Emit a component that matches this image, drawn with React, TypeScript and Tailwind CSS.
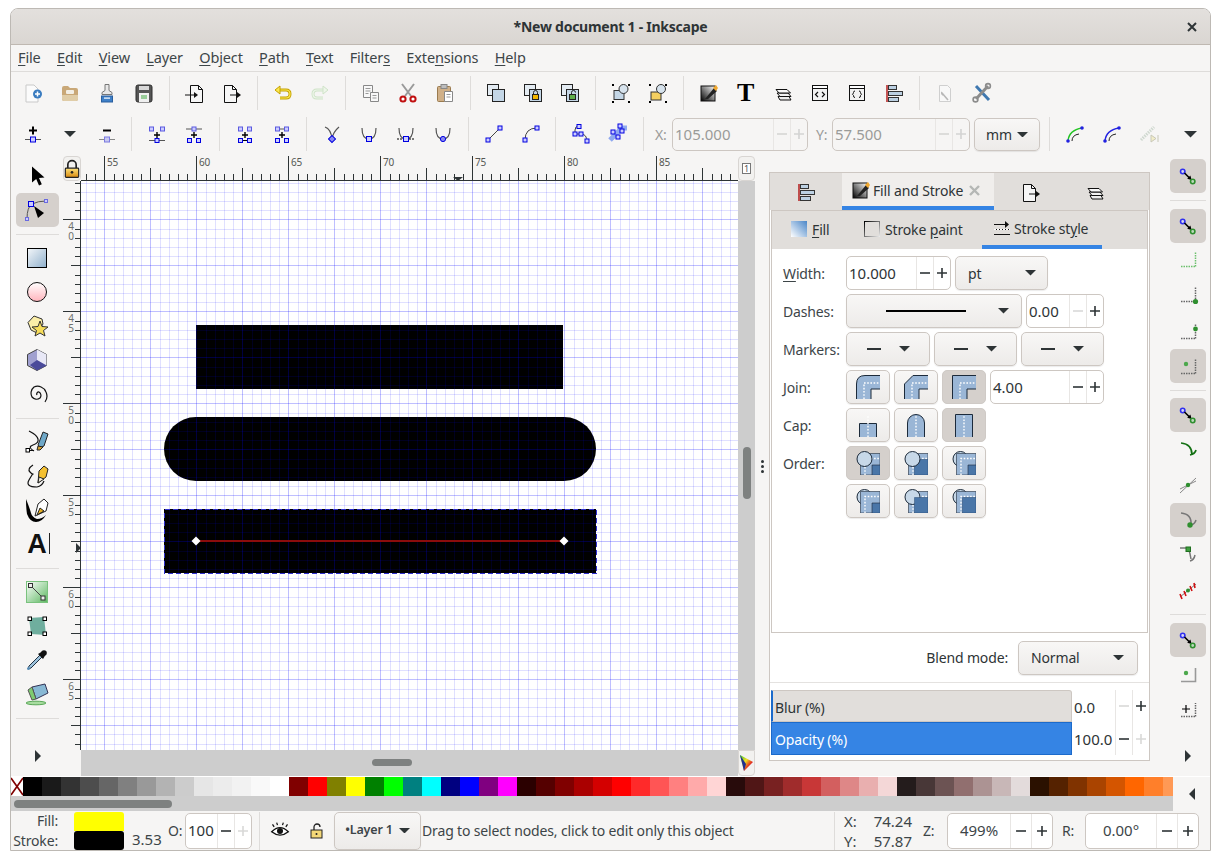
import type { ReactNode } from "react";

const ink = "#2e3436";

function Ico({ children, size = 24, view = "0 0 24 24" }: { children: ReactNode; size?: number; view?: string }) {
  return (
    <svg width={size} height={size} viewBox={view} fill="none" className="shrink-0">
      {children}
    </svg>
  );
}

function Caret({ w = 14 }: { w?: number }) {
  return (
    <svg width={w} height={w / 2} viewBox="0 0 14 7" className="shrink-0">
      <path d="M0 0h14L7 7z" fill={ink} />
    </svg>
  );
}

function NodeSq({ x, y, c = "#0000e0", f = "#ccccff", s = 4 }: { x: number; y: number; c?: string; f?: string; s?: number }) {
  return <rect x={x - s / 2} y={y - s / 2} width={s} height={s} fill={f} stroke={c} />;
}

function Page({ x, dog = true }: { x: number; dog?: boolean }) {
  return (
    <>
      <path d={`M${x} 4.5h8l4 4v13h-12z`} fill="#f6f6f6" stroke="#111" />
      {dog && <path d={`M${x + 8} 4.5v4h4`} stroke="#111" />}
    </>
  );
}

function Cross({ x, y, s = 3 }: { x: number; y: number; s?: number }) {
  return <path d={`M${x - s} ${y}h${2 * s}M${x} ${y - s}v${2 * s}`} stroke="#000" strokeWidth={s > 3 ? 2 : 1.4} />;
}

/* ---- first toolbar ---- */
const row1: ReactNode[][] = [
  [
    <Ico key="new"><path d="M5 4h8l4 4v13H5z" fill="#fbfbfb" stroke="#c9c9c9" /><circle cx="16.5" cy="13" r="4.5" fill="#3a7cc0" /><path d="M14 13h5M16.5 10.5v5" stroke="#fff" strokeWidth="1.5" /></Ico>,
    <Ico key="open"><path d="M4 7q0-2 2-2h4l2 2h6q2 0 2 2v9q0 2-2 2H6q-2 0-2-2z" fill="#c9a878" /><path d="M4 14h16v4q0 2-2 2H6q-2 0-2-2z" fill="#e0cda8" /><rect x="8" y="9" width="8" height="4" rx="1" fill="#f3efe6" /></Ico>,
    <Ico key="imp"><path d="M10 3.5h4v6l3 2v2H7v-2l3-2z" fill="#e8e8e8" stroke="#777" /><rect x="6.5" y="15" width="11" height="6" fill="#3f80c8" stroke="#2a5f9e" /><rect x="9" y="16.5" width="6" height="1.2" fill="#fff" /></Ico>,
    <Ico key="save"><rect x="4" y="4" width="16" height="17" rx="2" fill="#555" stroke="#2e2e2e" /><rect x="7" y="5" width="10" height="4" fill="#d8d8d8" /><rect x="7" y="12" width="10" height="9" fill="#f0f0f0" /><rect x="9" y="14" width="6" height="4" fill="#9c9" /></Ico>,
  ],
  [
    <Ico key="di"><Page x={7.5} /><path d="M2 14h11" stroke="#111" /><path d="M11 11l4 3-4 3z" fill="#111" /></Ico>,
    <Ico key="do"><Page x={4.5} /><path d="M10 14h8" stroke="#111" /><path d="M17 11l4 3-4 3z" fill="#111" /></Ico>,
  ],
  [
    <Ico key="undo"><path d="M6 9h9q4 0 4 4t-4 4H9" stroke="#c4a000" strokeWidth="3" /><path d="M6 9h9q4 0 4 4t-4 4H9" stroke="#fce94f" strokeWidth="1.2" /><path d="M9 5L4 9l5 4z" fill="#fce94f" stroke="#c4a000" /></Ico>,
    <Ico key="redo"><path d="M18 9H9q-4 0-4 4t4 4h6" stroke="#cfe3c8" strokeWidth="3" /><path d="M18 9H9q-4 0-4 4t4 4h6" stroke="#eef6ea" strokeWidth="1.2" /><path d="M15 5l5 4-5 4z" fill="#eef6ea" stroke="#cfe3c8" /></Ico>,
  ],
  [
    <Ico key="copy"><path d="M4.5 4.5h9v12h-9z" fill="#f8f8f8" stroke="#888" /><path d="M6.5 7.5h5M6.5 10h5M6.5 12.5h3" stroke="#999" /><path d="M11.5 11.5h8v9h-8z" fill="#f8f8f8" stroke="#888" /><path d="M13.5 14.5h4M13.5 17h4" stroke="#999" /></Ico>,
    <Ico key="cut"><path d="M6 3l9 12M18 3L9 15" stroke="#9a9a9a" strokeWidth="2" /><circle cx="7" cy="18" r="2.6" fill="#fff" stroke="#c01010" strokeWidth="2" /><circle cx="17" cy="18" r="2.6" fill="#fff" stroke="#c01010" strokeWidth="2" /></Ico>,
    <Ico key="paste"><rect x="4.5" y="5.5" width="13" height="15" rx="1" fill="#d0b088" stroke="#9a7b4f" /><rect x="8" y="3.5" width="6" height="4" fill="#bdbdbd" stroke="#888" /><path d="M11.5 10.5h8v10h-8z" fill="#fff" stroke="#888" /><path d="M13.5 13.5h4M13.5 16h4" stroke="#999" /></Ico>,
  ],
  [
    <Ico key="dup"><rect x="3.5" y="3.5" width="11" height="11" fill="#e3ebf2" stroke="#222" /><rect x="8.5" y="8.5" width="12" height="12" fill="#c4d6e6" stroke="#222" /></Ico>,
    <Ico key="clone"><rect x="3.5" y="3.5" width="11" height="11" fill="#e3ebf2" stroke="#222" /><rect x="8.5" y="8.5" width="12" height="12" fill="#c4d6e6" stroke="#222" /><rect x="11.5" y="13.5" width="6" height="5" fill="#f2b600" stroke="#222" /><path d="M12.5 13v-1.5a2 2 0 0 1 4 0V13" stroke="#222" /></Ico>,
    <Ico key="unclone"><rect x="3.5" y="3.5" width="11" height="11" fill="#e3ebf2" stroke="#222" /><rect x="8.5" y="8.5" width="12" height="12" fill="#c4d6e6" stroke="#222" /><rect x="11.5" y="13.5" width="6" height="5" fill="#5fae4b" stroke="#222" /><path d="M13.5 13v-1.5a2 2 0 0 1 4 0" stroke="#222" /></Ico>,
  ],
  [
    <Ico key="grp"><rect x="5" y="9.5" width="10" height="9" fill="#c4d6e6" stroke="#333" /><circle cx="14.5" cy="8" r="4.5" fill="#d6e2ec" stroke="#333" />{[[3, 3], [19, 3], [3, 20], [19, 20]].map(([x, y]) => <rect key={`${x}${y}`} x={x} y={y} width="2" height="2" fill="#000" />)}</Ico>,
    <Ico key="ugrp"><rect x="5" y="11" width="10" height="8" fill="#f4cf60" stroke="#333" /><circle cx="15" cy="8" r="4.5" fill="#d6e2ec" stroke="#333" />{[[3, 3], [19, 3], [3, 20], [19, 20]].map(([x, y]) => <rect key={`${x}${y}`} x={x} y={y} width="2" height="2" fill="#000" />)}</Ico>,
  ],
  [
    <FillStrokeIcon key="fs" />,
    <span key="t" className="[font-family:'Liberation_Serif',serif] text-[26px] leading-none font-bold text-black">T</span>,
    <LayersIcon key="lay" />,
    <Ico key="xml"><rect x="4.5" y="4.5" width="15" height="15" fill="#f2f2f2" stroke="#111" /><rect x="4.5" y="4.5" width="15" height="3" fill="#fff" stroke="#111" /><path d="M10 11l-2.5 2.5L10 16M14 11l2.5 2.5L14 16" stroke="#111" strokeWidth="1.2" /></Ico>,
    <Ico key="obj"><rect x="4.5" y="4.5" width="15" height="15" fill="#f2f2f2" stroke="#111" /><rect x="4.5" y="4.5" width="15" height="3" fill="#fff" stroke="#111" /><path d="M10 10q-1.5 0-1.5 1.5v.5l-1 1.3 1 1.2v.5q0 1.5 1.5 1.5M14 10q1.5 0 1.5 1.5v.5l1 1.3-1 1.2v.5q0 1.5-1.5 1.5" stroke="#111" /></Ico>,
    <AlignIcon key="al" />,
  ],
  [
    <Ico key="dp"><path d="M6.5 4.5h8l3 3v13h-11z" fill="#f8f8f8" stroke="#cfcfcf" /><path d="M9 12l6 7M9 11a2 2 0 0 0 2 3" stroke="#b8b8b8" strokeWidth="1.6" /></Ico>,
    <Ico key="pref"><path d="M6 5l13 14" stroke="#3f78b0" strokeWidth="3" /><path d="M18 5L6 18" stroke="#8c8c8c" strokeWidth="3" /><circle cx="5.5" cy="18.5" r="2.4" stroke="#8c8c8c" strokeWidth="1.6" /><circle cx="18" cy="5" r="2.4" stroke="#8c8c8c" strokeWidth="1.6" /></Ico>,
  ],
];

function FillStrokeIcon() {
  return (
    <Ico>
      <defs>
        <linearGradient id="fsg" x1="0" y1="1" x2="1" y2="0">
          <stop offset="0" stopColor="#000" />
          <stop offset="1" stopColor="#fff" />
        </linearGradient>
      </defs>
      <rect x="4" y="5" width="14" height="15" fill="url(#fsg)" stroke="#111" />
      <path d="M8 18l9-11 3 3-9 8z" fill="#222" />
      <path d="M16 7l3-3 2 3-2 3z" fill="#f0a830" />
    </Ico>
  );
}

function LayersIcon() {
  return (
    <Ico>
      <path d="M7 15.5h11l2 3.5H9z" fill="#eee" stroke="#111" />
      <path d="M6 12h11l3 3.5H9z" fill="#f3f3f3" stroke="#111" />
      <path d="M5 8.5h11l3.5 3.5H8z" fill="#fafafa" stroke="#111" />
    </Ico>
  );
}

function AlignIcon() {
  return (
    <Ico>
      <path d="M5 4v17" stroke="#b01010" strokeWidth="1.4" />
      <rect x="6.5" y="4.5" width="8" height="4" fill="#bcd0e2" stroke="#333" />
      <rect x="6.5" y="10.5" width="14" height="4" fill="#bcd0e2" stroke="#333" />
      <rect x="6.5" y="16.5" width="10" height="4" fill="#bcd0e2" stroke="#333" />
    </Ico>
  );
}

/* ---- second toolbar ---- */
const blue = "#0000e0";
const row2a: ReactNode[][] = [
  [
    <Ico key="add"><Cross x={12} y={8.5} s={4} /><path d="M4 17.5h16" stroke="#555" /><NodeSq x={12} y={17.5} s={5} /></Ico>,
    <Caret key="c" w={12} />,
    <Ico key="del"><path d="M8 8.5h8" stroke="#000" strokeWidth="2" /><path d="M4 17.5h16" stroke="#888" /><NodeSq x={12} y={17.5} s={5} c="#7a7ae0" f="#c8c8f0" /></Ico>,
  ],
  [
    <Ico key="j1"><NodeSq x={6.5} y={7} c="#5a5ae0" /><NodeSq x={17.5} y={7} c="#5a5ae0" /><Cross x={12} y={13} /><path d="M4 18.5h16" stroke="#555" /><NodeSq x={12} y={18.5} /></Ico>,
    <Ico key="j2"><path d="M4 7h16" stroke="#555" /><NodeSq x={12} y={7} c="#5a5ae0" /><Cross x={12} y={13} /><NodeSq x={7.5} y={18.5} /><NodeSq x={16.5} y={18.5} /></Ico>,
  ],
  [
    <Ico key="j3"><NodeSq x={7.5} y={7} c="#5a5ae0" /><NodeSq x={16.5} y={7} c="#5a5ae0" /><Cross x={12} y={13} /><path d="M5 18.5h14" stroke="#000" /><NodeSq x={7.5} y={18.5} /><NodeSq x={16.5} y={18.5} /></Ico>,
    <Ico key="j4"><path d="M5 7h14" stroke="#555" /><NodeSq x={7.5} y={7} c="#5a5ae0" /><NodeSq x={16.5} y={7} c="#5a5ae0" /><Cross x={12} y={13} /><NodeSq x={7.5} y={18.5} /><NodeSq x={16.5} y={18.5} /></Ico>,
  ],
  [
    <Ico key="n1"><path d="M5 5q6 2 7 12Q13 10 19 5" stroke="#555" strokeWidth="1.2" /><rect x="9.5" y="14.5" width="5" height="5" fill="#8888f0" stroke={blue} transform="rotate(45 12 17)" /></Ico>,
    <Ico key="n2"><path d="M5 6q0 11 7 11t7-11" stroke="#555" strokeWidth="1.2" /><NodeSq x={12} y={17} s={5} /></Ico>,
    <Ico key="n3"><path d="M5 6q0 11 7 11t7-11" stroke="#555" strokeWidth="1.2" /><path d="M3 17h18" stroke="#000" strokeDasharray="2 1" /><NodeSq x={12} y={17} s={5} /></Ico>,
    <Ico key="n4"><path d="M5 6q0 11 7 11t7-11" stroke="#555" strokeWidth="1.2" /><circle cx="12" cy="17" r="2.6" fill="#8888f0" stroke={blue} /></Ico>,
  ],
  [
    <Ico key="s1"><path d="M6 18L18 6" stroke="#444" /><NodeSq x={6} y={18} /><NodeSq x={18} y={6} /></Ico>,
    <Ico key="s2"><path d="M6 18q0-12 12-12" stroke="#444" /><NodeSq x={6} y={18} /><NodeSq x={18} y={6} /></Ico>,
  ],
  [
    <Ico key="op"><path d="M6 12V8q0-4 4-4M6 12h6q6 0 6 8" stroke="#444" /><NodeSq x={10} y={4.5} /><NodeSq x={6} y={12} /><NodeSq x={12} y={12} /><NodeSq x={18} y={19} /></Ico>,
    <Ico key="sp"><path d="M4 18L16 6h5" stroke="#8fa8f0" strokeWidth="5" /><NodeSq x={14} y={4} /><NodeSq x={7} y={10} /><NodeSq x={16} y={9} /><NodeSq x={12} y={15} /></Ico>,
  ],
];

function ToolRow1() {
  return (
    <div className="flex h-[41.5px] items-center pl-[3px]">
      {row1.map((group, i) => (
        <div key={i} className="flex items-center">
          {i > 0 && <Sep w="w-[14px]" />}
          {group.map((icon, j) => <Slot key={j}>{icon}</Slot>)}
        </div>
      ))}
    </div>
  );
}

function Slot({ children }: { children: ReactNode }) {
  return <div className="flex h-[34px] w-[37px] shrink-0 items-center justify-center">{children}</div>;
}

function Sep({ w }: { w: string }) {
  return (
    <div className={`flex h-[34px] shrink-0 justify-center ${w}`}>
      <div className="h-full w-px bg-[#dedcda]" />
    </div>
  );
}

function Spin({
  value,
  width,
  box,
  minusOff,
  plusOff,
  off,
}: {
  value: string;
  width: string;
  box?: string;
  minusOff?: boolean;
  plusOff?: boolean;
  off?: boolean;
}) {
  const on = off ? "#d3d3d2" : ink;
  return (
    <div className={`flex items-stretch rounded-[5px] border border-[#cdc7c2] ${off ? "bg-[#f6f5f4]" : "bg-white"} ${width} ${box ?? "h-[34px]"}`}>
      <span className={`flex min-w-0 flex-1 items-center pl-[2px] text-[15px] tracking-normal ${off ? "text-[#9a9b99]" : "text-[#2e3436]"}`}>{value}</span>
      <PlusMinus sign="-" color={minusOff ? "#d9d9d8" : on} />
      <PlusMinus sign="+" color={plusOff ? "#d9d9d8" : on} />
    </div>
  );
}

function PlusMinus({ sign, color }: { sign: "+" | "-"; color: string }) {
  return (
    <div className="flex w-[17px] items-center justify-center border-l border-[#e8e6e4]">
      <svg width="10" height="10" viewBox="0 0 10 10">
        <path d={sign === "+" ? "M0 5h10M5 0v10" : "M0 5h10"} stroke={color} strokeWidth="1.6" />
      </svg>
    </div>
  );
}

const btn = "rounded-[5px] border border-[#cdc7c2] bg-gradient-to-b from-[#f8f7f6] to-[#edebe9] shadow-[0_1px_1px_rgba(0,0,0,0.08)]";

function ToolRow2() {
  return (
    <div className="flex h-[41.5px] items-center pl-[3px]">
      {row2a.map((group, i) => (
        <div key={i} className="flex items-center">
          {i > 0 && <Sep w="w-[13.5px]" />}
          {group.map((icon, j) => <Slot key={j}>{icon}</Slot>)}
        </div>
      ))}
      <Sep w="w-[13.5px]" />
      <span className="ml-[5px] w-[17px] text-[#9a9b99]">X:</span>
      <Spin value="105.000" width="w-[136px]" box="h-[33px]" off />
      <span className="ml-[8px] w-[16px] text-[#9a9b99]">Y:</span>
      <Spin value="57.500" width="w-[138px]" box="h-[33px]" off />
      <div className={`ml-[4px] flex h-[33px] w-[66px] items-center justify-center gap-[5px] ${btn}`}>
        mm <Caret w={11} />
      </div>
      <div className="ml-[3px]">
        <Sep w="w-[13px]" />
      </div>
      <Slot>
        <Ico><path d="M5 19q1-11 14-13" stroke="#22c422" strokeWidth="1.4" /><path d="M9 19q0-6 7-7" stroke="#222" /><circle cx="5" cy="19" r="1.8" fill="#2222e0" /><circle cx="19" cy="6" r="1.8" fill="#2222e0" /></Ico>
      </Slot>
      <Slot>
        <Ico><path d="M5 19q1-11 14-13" stroke="#2222e0" strokeWidth="1.4" /><path d="M9 19q0-6 7-7" stroke="#222" /><circle cx="5" cy="19" r="1.8" fill="#2222e0" /><circle cx="19" cy="6" r="1.8" fill="#2222e0" /></Ico>
      </Slot>
      <Slot>
        <Ico><path d="M4 18L17 5" stroke="#cfd8cf" strokeWidth="3" strokeDasharray="1.5 1" /><path d="M14 13l5 3.5-5 3.5zM21 13v7" fill="#f2edc8" stroke="#c8c8b8" /></Ico>
      </Slot>
      <div className="ml-[5px] flex w-[37px] justify-center">
        <Caret w={13} />
      </div>
    </div>
  );
}

/* ---- left toolbox ---- */
function LeftTools() {
  const tools: (ReactNode | null)[] = [
    <Ico key="sel"><path d="M7 2.5v16l4.2-3.6 2.8 6.6 2.8-1.2-2.8-6.4 5.5-.4z" fill="#000" /></Ico>,
    "node",
    null,
    <Ico key="rect"><defs><linearGradient id="rg" x1="0" y1="0" x2="1" y2="1"><stop offset="0" stopColor="#f4f7fa" /><stop offset="1" stopColor="#8fb0cc" /></linearGradient></defs><rect x="2.5" y="2.5" width="19" height="19" fill="url(#rg)" stroke="#000" /></Ico>,
    <Ico key="circ"><defs><linearGradient id="cg" x1="0" y1="1" x2="0" y2="0"><stop offset="0" stopColor="#ffb4bc" /><stop offset="1" stopColor="#fff" /></linearGradient></defs><circle cx="12" cy="12" r="9.5" fill="url(#cg)" stroke="#111" /></Ico>,
    <Ico key="star"><path d="M3 8.5L9 2l8 3 1 5-6 9-6-3z" fill="#fbeea8" stroke="#333" /><path d="M15 7l2 5.5 6 .5-4.5 3.5 1.5 5.5-5-3-5 3 1.5-5.5L7 13l6-.5z" fill="#f6dc5a" stroke="#333" /></Ico>,
    <Ico key="3d"><path d="M12 1.5l9.5 5v11l-9.5 5-9.5-5v-11z" fill="#a0a0d0" stroke="#444" /><path d="M12 1.5l9.5 5v11l-9.5-5z" fill="#e8e8f6" /><path d="M5 17l7-5 9.5 5.5-9.5 5z" fill="#4a4a9a" /></Ico>,
    <Ico key="sp"><path d="M12 13a2 2 0 0 1 2-3 4 4 0 0 1 1 6 6 6 0 0 1-8-1 8 8 0 0 1 2-10 9 9 0 0 1 12 5 10 10 0 0 1-1 10" stroke="#111" strokeWidth="1.2" /></Ico>,
    null,
    <Ico key="pen"><path d="M4 1q8 4 9 8t-5 6 1 6" stroke="#111" strokeWidth="1.2" /><path d="M3 20.5h6" stroke="#111" /><rect x="1" y="18.5" width="3.5" height="3.5" fill="#fff" stroke="#000" /><path d="M13 15l5-13 5 2-4 12-4 2z" fill="#6fa8c8" stroke="#222" /><path d="M12 20l1-4 5 1-3 3z" fill="#d4a030" stroke="#222" /></Ico>,
    <Ico key="pcl"><path d="M8 1Q2 5 5 8t3 2-4 6 8 7q5-1 7-6" stroke="#111" strokeWidth="1.2" /><path d="M13 19l1-12 5-5 4 3-2 8z" fill="#f4c030" stroke="#222" /><path d="M13 19l1-6 5 2z" fill="#f6f0e0" stroke="#222" /></Ico>,
    <Ico key="cal"><path d="M1 1q4 10 5 14t6 6q5 0 9-4-4 7-10 7t-9-8Q1 10 1 1z" fill="#000" /><path d="M10 18l3-12 6-5 4 4-2 8z" fill="#fff" stroke="#222" /><path d="M12 17l3-7 4 3z" fill="#e8b020" stroke="#222" /></Ico>,
    <div key="txt" className="relative flex h-[24px] w-[24px] items-center justify-center"><span className="[font-family:'Liberation_Sans',sans-serif] text-[27px] leading-none font-bold text-[#111]">A</span><span className="absolute top-[1px] right-[-1px] h-[21px] w-px bg-[#222]" /></div>,
    null,
    <Ico key="grad"><defs><linearGradient id="gg" x1="0" y1="0" x2="1" y2="1"><stop offset="0" stopColor="#fff" /><stop offset="1" stopColor="#5cb860" /></linearGradient></defs><rect x="1.5" y="1.5" width="21" height="21" fill="url(#gg)" stroke="#7ac27e" /><path d="M6 6l12 12" stroke="#444" /><rect x="3.5" y="3.5" width="4" height="4" fill="#eee" stroke="#333" /><rect x="16" y="16" width="4" height="4" fill="#eee" stroke="#333" /></Ico>,
    <Ico key="mesh"><path d="M4 4l15-1 2 18-15-1z" fill="#6fae9e" />{[[3, 3], [18, 3], [3, 18], [18, 18]].map(([x, y]) => <rect key={`${x}-${y}`} x={x} y={y} width="3.5" height="3.5" fill="#fff" stroke="#000" />)}</Ico>,
    <Ico key="drop"><path d="M3 21l1-3L15 7l2 2L6 20z" fill="#9cc2dc" stroke="#234" /><path d="M13 6l5-3 3 3-3 5z" fill="#111" /><circle cx="19" cy="5" r="2.8" fill="#111" /><circle cx="3.5" cy="20.5" r="1.5" fill="#5b8fb8" /></Ico>,
    <Ico key="buck"><ellipse cx="11" cy="21" rx="10" ry="1.8" fill="#a8dca0" stroke="#5aa858" /><path d="M7 5l13-3 3 9-12 6z" fill="#88b8d4" stroke="#335" /><path d="M3 8l4-3 4 12-4 1z" fill="#7ecb70" stroke="#555" /></Ico>,
    null,
  ];
  return (
    <div className="flex w-[52px] shrink-0 flex-col items-center pt-[4px]">
      {tools.map((t, i) => {
        if (t === null) {
          return (
            <div key={i} className="flex h-[14px] w-[43px] items-center">
              <div className="h-px w-full bg-[#dedcda]" />
            </div>
          );
        }
        if (t === "node") {
          return (
            <div key={i} className="flex h-[34px] w-[43px] items-center justify-center rounded-[5px] bg-[#d5d0cc]">
              <Ico>
                <path d="M2 21q0-12 5-15 6-3 14-3" stroke="#555" />
                <NodeSq x={6} y={6} s={5} />
                <NodeSq x={21} y={3} s={3} c="#6a6ae0" />
                <NodeSq x={2} y={21} s={3} c="#6a6ae0" />
                <path d="M9 8l10 7-6 5z" fill="#000" />
              </Ico>
            </div>
          );
        }
        return (
          <div key={i} className="flex h-[34px] w-[43px] items-center justify-center">
            {t}
          </div>
        );
      })}
      <div className="flex-1" />
      <svg width="8" height="12" viewBox="0 0 8 12" className="mb-[14px] ml-[1px]">
        <path d="M1 0l6 6-6 6z" fill={ink} />
      </svg>
    </div>
  );
}

/* ---- rulers and canvas ---- */
const range = (a: number, b: number) => Array.from({ length: b - a + 1 }, (_, i) => a + i);
const px = (v: number) => Math.round(v) + 0.5;

function TopRuler() {
  return (
    <svg width="657" height="26" className="shrink-0">
      {range(-2, 69).map((i) => {
        const x = px(23.4 + i * 9.2);
        const y0 = i % 10 === 0 ? 1 : i % 5 === 0 ? 13 : 19;
        return <line key={i} x1={x} x2={x} y1={y0} y2={26} stroke={ink} shapeRendering="crispEdges" />;
      })}
      <line x1="0" x2="657" y1="25.5" y2="25.5" stroke={ink} shapeRendering="crispEdges" />
      {[55, 60, 65, 70, 75, 80, 85].map((v, i) => (
        <text key={v} x={26 + i * 92} y="11" fontSize="10" fill="#555753" fontFamily="Noto Sans">
          {v}
        </text>
      ))}
      <path d="M372 22h10l-5 4z" fill={ink} />
    </svg>
  );
}

function LeftRuler() {
  return (
    <svg width="18" height="569" className="shrink-0">
      {range(-4, 57).map((i) => {
        const y = px(38.3 + i * 9.2);
        const x0 = i % 10 === 0 ? 0 : i % 5 === 0 ? 8 : 12;
        return <line key={i} x1={x0} x2={18} y1={y} y2={y} stroke={ink} shapeRendering="crispEdges" />;
      })}
      <line x1="17.5" x2="17.5" y1="0" y2="569" stroke={ink} shapeRendering="crispEdges" />
      {[40, 45, 50, 55, 60, 65].map((v, i) => (
        <text
          key={v}
          x="8"
          y={38.3 + i * 92}
          fontSize="10"
          fill="#6f716d"
          fontFamily="Noto Sans"
          letterSpacing="-4.6"
          className="[writing-mode:vertical-rl] [text-orientation:upright]"
        >
          {v}
        </text>
      ))}
      <path d="M13 362l5 5-5 5z" fill={ink} />
    </svg>
  );
}

function Canvas() {
  const vx = range(-2, 69).map((i) => ({ p: px(23.4 + i * 9.2), major: i % 5 === 0 }));
  const hy = range(-4, 57).map((i) => ({ p: px(38.3 + i * 9.2), major: i % 5 === 0 }));
  return (
    <svg width="657" height="569" className="shrink-0 bg-white" shapeRendering="crispEdges">
      <rect x="115" y="144" width="367" height="64" fill="#000" />
      <rect x="83" y="236" width="432" height="64" rx="32" fill="#000" shapeRendering="auto" />
      <rect x="83" y="328" width="432" height="64" fill="#000" />
      {vx.map((l, i) => (
        <line key={i} x1={l.p} x2={l.p} y1="0" y2="569" stroke="#0000ff" strokeOpacity={l.major ? 0.25 : 0.12} />
      ))}
      {hy.map((l, i) => (
        <line key={i} x1="0" x2="657" y1={l.p} y2={l.p} stroke="#0000ff" strokeOpacity={l.major ? 0.25 : 0.12} />
      ))}
      <rect x="83.5" y="328.5" width="432" height="64" fill="none" stroke="#3030d0" strokeDasharray="5 3" />
      <rect x="115" y="359" width="368" height="2" fill="#8b0c0c" />
      {[115, 483].map((x) => (
        <path key={x} d={`M${x} 355.5l4.5 4.5-4.5 4.5-4.5-4.5z`} fill="#fff" shapeRendering="auto" />
      ))}
    </svg>
  );
}

const swatches = [
  "#000000", "#1a1a1a", "#333333", "#4d4d4d", "#666666", "#808080", "#999999", "#b3b3b3", "#cccccc", "#e6e6e6", "#ececec", "#f2f2f2", "#f9f9f9", "#ffffff",
  "#800000", "#ff0000", "#808000", "#ffff00", "#008000", "#00ff00", "#008080", "#00ffff", "#000080", "#0000ff", "#800080", "#ff00ff",
  "#2b0000", "#550000", "#800000", "#aa0000", "#d40000", "#ff0000", "#ff2a2a", "#ff5555", "#ff8080", "#ffaaaa", "#ffd5d5",
  "#280b0b", "#501616", "#782121", "#a02c2c", "#c83737", "#d35f5f", "#de8787", "#e9afaf", "#f4d7d7",
  "#241c1c", "#483737", "#6c5353", "#916f6f", "#ac9393", "#c8b7b7", "#e3dbdb",
  "#2b1100", "#552200", "#803300", "#aa4400", "#d45500", "#ff6600", "#ff7f2a", "#ff9955",
];

/* ---- right snap bar, drawn in real pixels around the point 10,10 ---- */
function Snap({ kind }: { kind: string }) {
  const v = "-2 -2 24 24";
  const dotted = <path d="M3 17.5h14M17.5 17.5V3" stroke="#666" strokeWidth="1.5" strokeDasharray="1.5 1" />;
  switch (kind) {
    case "master":
      return <Ico view={v}><circle cx="4.7" cy="5.5" r="2.2" stroke="#3030f0" strokeWidth="1.6" fill="#d6d6f0" /><path d="M6.5 7l5 5" stroke="#000" strokeWidth="1.6" /><path d="M13.6 14l-4.4-1.2 3.2-3.2z" fill="#000" /><circle cx="14.7" cy="15.5" r="2.2" stroke="#2f8f2f" strokeWidth="1.6" fill="#bcd8bc" /></Ico>;
    case "bbox":
      return <Ico view={v}><path d="M3 15.5h14M17.5 15.5V1" stroke="#6cc06c" strokeWidth="1.5" strokeDasharray="1.5 1" /></Ico>;
    case "edge":
      return <Ico view={v}><path d="M3 15.5h14M17.5 15.5V1" stroke="#666" strokeWidth="1.5" strokeDasharray="1.5 1" /><circle cx="17.5" cy="15.5" r="2.6" fill="#2f8f2f" /></Ico>;
    case "corner":
      return <Ico view={v}><path d="M3 17.5h14M17.5 17.5V3" stroke="#666" strokeWidth="1.5" strokeDasharray="1.5 1" /><circle cx="17.5" cy="8" r="2.4" fill="#2f8f2f" /></Ico>;
    case "mid":
      return <Ico view={v}>{dotted}<circle cx="8" cy="8" r="2.2" fill="#4ca84c" /></Ico>;
    case "curve":
      return <Ico view={v}><path d="M3 3q11 1 11 12M18 10q-1 4-6 5" stroke="#137013" strokeWidth="1.7" /></Ico>;
    case "x":
      return <Ico view={v}><path d="M2 18L18 3M2 14l16-8" stroke="#888" /><circle cx="10" cy="10" r="2.2" fill="#2f8f2f" /></Ico>;
    case "smooth":
      return <Ico view={v}><path d="M3 3q11 1 10 12M18 10q-1 4-5 5" stroke="#777" strokeWidth="1.5" /><circle cx="12" cy="15" r="2.7" fill="#2f8f2f" /></Ico>;
    case "node":
      return <Ico view={v}><path d="M2 3h8q2 4 3 11M17 10q-1 5-5 6" stroke="#777" strokeWidth="1.5" /><rect x="8" y="2" width="4.5" height="4.5" fill="#3f9f3f" stroke="#1f6f1f" /></Ico>;
    case "red":
      return <Ico view={v}><path d="M2 17L18 4" stroke="#777" /><path d="M2 14l2 5M6 11l2 5M12 6l2 5M16 3l1 5" stroke="#d01010" strokeWidth="1.6" /><circle cx="10" cy="10.5" r="2" fill="#2f8f2f" /></Ico>;
    case "center":
      return <Ico view={v}><path d="M3 16.5h14.5V3" stroke="#999" strokeWidth="1.6" /><circle cx="8" cy="8" r="2.2" fill="#4ca84c" /></Ico>;
    default:
      return <Ico view={v}><path d="M3 16.5h14M17.5 16.5V3" stroke="#666" strokeWidth="1.5" strokeDasharray="1.5 1" /><path d="M4 9h8M8 5v8" stroke="#000" strokeWidth="1.2" /></Ico>;
  }
}

function RightTools() {
  const items = ["*master", "|", "*master", "bbox", "edge", "corner", "*mid", "|", "*master", "curve", "x", "*smooth", "node", "red", "|", "*master", "center", "rot"];
  return (
    <div className="flex w-[60px] shrink-0 flex-col pt-[3.5px] pl-[20px]">
      {items.map((it, i) => {
        if (it === "|") {
          return (
            <div key={i} className="flex h-[14.5px] w-[36px] items-center">
              <div className="h-px w-full bg-[#dedcda]" />
            </div>
          );
        }
        const active = it.startsWith("*");
        return (
          <div key={i} className="flex h-[35px] w-[36px] items-center justify-center">
            <div className={`flex h-[34px] w-[36px] items-center justify-center rounded-[5px] ${active ? "bg-[#d5d0cc]" : ""}`}>
              <Snap kind={active ? it.slice(1) : it} />
            </div>
          </div>
        );
      })}
      <div className="flex-1" />
      <div className="mb-[14px] flex w-[36px] justify-center">
        <svg width="8" height="12" viewBox="0 0 8 12">
          <path d="M1 0l6 6-6 6z" fill={ink} />
        </svg>
      </div>
    </div>
  );
}

/* ---- stroke style panel icons ---- */
const dots = { stroke: "#fff", strokeWidth: 1.4, strokeDasharray: "1.6 1.6" };
const light = "#9ab6d6";

function Join({ d }: { d: string }) {
  return (
    <Ico>
      <path d={`${d}H24V14H15V24H0.5Z`} fill={light} />
      <path d={d + "H24M24 14H15V24"} stroke="#1c2a3a" />
      <path d="M8 24V8H24" {...dots} />
    </Ico>
  );
}

function Cap({ d }: { d: string }) {
  return (
    <Ico>
      <path d={d + "Z"} fill={light} />
      <path d={d} stroke="#1c2a3a" />
      <path d="M12 24V3" {...dots} />
    </Ico>
  );
}

function Order({ layers }: { layers: string }) {
  const parts: Record<string, ReactNode> = {
    m: <circle key="m" cx="8.5" cy="8" r="7.5" fill="#c7d8e8" stroke="#1c2a3a" />,
    s: (
      <g key="s">
        <path d="M4.5 24V2.5H24V14H16V24z" fill={light} stroke="#1c2a3a" strokeWidth="0.6" />
        <path d="M9 24V7.5H24" {...dots} />
      </g>
    ),
    f: <path key="f" d="M10.5 24V8.5H24V24z" fill="#4a76a8" stroke="#2a4a70" strokeWidth="0.5" />,
  };
  return <Ico>{layers.split("").map((l) => parts[l])}</Ico>;
}

function IconBtn({ children, on }: { children: ReactNode; on?: boolean }) {
  return (
    <div className={`flex h-[34px] w-[44px] items-center justify-center ${on ? "rounded-[5px] border border-[#cfcac6] bg-[#d5d0cc]" : btn}`}>
      {children}
    </div>
  );
}

function Dropdown({ width, children, caret = 11 }: { width: string; children: ReactNode; caret?: number }) {
  return (
    <div className={`flex h-[34px] items-center ${width} ${btn}`}>
      {children}
      <Caret w={caret} />
    </div>
  );
}

function Label({ children }: { children: ReactNode }) {
  return <div className="w-[63px] shrink-0 text-[#3d4548]">{children}</div>;
}

function Row({ label, children }: { label: ReactNode; children: ReactNode }) {
  return (
    <div className="flex h-[34px] items-center">
      <Label>{label}</Label>
      <div className="flex items-center gap-[4px]">{children}</div>
    </div>
  );
}

function Dock() {
  return (
    <div className="mt-[17px] flex h-[589px] w-[381px] shrink-0 flex-col border-x border-b border-[#cdc7c2] bg-white">
      <div className="flex h-[38px] shrink-0 border-t border-[#cdc7c2] bg-[#e1dedb]">
        <div className="flex w-[72px] items-center justify-center"><AlignIcon /></div>
        <div className="flex w-[152px] items-center border-b-[4px] border-[#3584e4] bg-[#f0eeec] pt-[1px] pl-[7px]">
          <FillStrokeIcon />
          <span>Fill and Stroke</span>
          <svg width="11" height="11" viewBox="0 0 11 11" className="ml-[6px]"><path d="M1 1l9 9M10 1l-9 9" stroke="#b5b7b5" strokeWidth="2.4" /></svg>
        </div>
        <div className="flex w-[74px] items-center justify-center"><Ico><Page x={4.5} /><path d="M10 14h8" stroke="#111" /><path d="M17 11l4 3-4 3z" fill="#111" /></Ico></div>
        <div className="flex w-[54px] items-center justify-center"><LayersIcon /></div>
      </div>
      <div className="mx-px flex h-[423px] shrink-0 flex-col border-x border-b border-t border-[#cdc7c2]">
        <div className="flex h-[38px] shrink-0 bg-[#e1dedb]">
          <div className="flex w-[80px] items-center gap-[5px] pb-[2px] pl-[19px]">
            <svg width="16" height="16"><defs><linearGradient id="fl" x1="1" y1="0" x2="0" y2="1"><stop offset="0" stopColor="#4a86c8" /><stop offset="1" stopColor="#fff" /></linearGradient></defs><rect width="16" height="16" fill="url(#fl)" /></svg>
            <span><u className="underline-offset-2">F</u>ill</span>
          </div>
          <div className="flex w-[130px] items-center gap-[5px] pb-[2px] pl-[12px]">
            <svg width="16" height="16"><defs><linearGradient id="sp2" x1="1" y1="1" x2="0" y2="0"><stop offset="0" stopColor="#e8e8e8" /><stop offset="1" stopColor="#000" /></linearGradient></defs><rect x="0.5" y="0.5" width="15" height="15" fill="none" stroke="url(#sp2)" /></svg>
            <span>Stroke <u className="underline-offset-2">p</u>aint</span>
          </div>
          <div className="flex w-[120px] items-center gap-[4px] border-b-[4px] border-[#3584e4] pl-[12px]">
            <svg width="16" height="16" viewBox="0 0 16 16"><path d="M0 4.5h14M0 9.5h16" stroke="#111" strokeDasharray="20" /><path d="M0 9.5h16" stroke="#fff" strokeDasharray="2 1" /><path d="M0 14.5h16" stroke="#111" /><path d="M11 1l4 3.5-4 3.5z" fill="#111" /></svg>
            <span>Stroke st<u className="underline-offset-2">y</u>le</span>
          </div>
        </div>
        <div className="flex flex-col gap-[4px] pt-[7px] pl-[11px]">
          <Row label={<><u className="underline-offset-2">W</u>idth:</>}>
            <Spin value="10.000" width="w-[105px]" />
            <Dropdown width="w-[93px] pl-[12px] pr-[11px] justify-between">
              <span>pt</span>
            </Dropdown>
          </Row>
          <Row label="Dashes:">
            <div className={`flex h-[34px] w-[176px] items-center pr-[12px] pl-[39px] ${btn}`}>
              <div className="h-[2px] w-[80px] bg-black" />
              <div className="flex-1" />
              <Caret w={11} />
            </div>
            <Spin value="0.00" width="w-[78px]" minusOff />
          </Row>
          <Row label="Markers:">
            {["w-[84px]", "w-[83px]", "w-[83px]"].map((w, i) => (
              <div key={i} className={`flex h-[34px] items-center justify-center gap-[18px] ${w} ${btn}`}>
                <div className="h-[2px] w-[14px] bg-[#2e3436]" />
                <Caret w={11} />
              </div>
            ))}
          </Row>
          <Row label="Join:">
            <IconBtn><Join d="M0.5 24V9Q0.5 0.5 9 0.5" /></IconBtn>
            <IconBtn><Join d="M0.5 24V9L9 0.5" /></IconBtn>
            <IconBtn on><Join d="M0.5 24V0.5" /></IconBtn>
            <Spin value="4.00" width="w-[114px]" />
          </Row>
          <Row label="Cap:">
            <IconBtn><Cap d="M3.5 24V10.5H20.5V24" /></IconBtn>
            <IconBtn><Cap d="M3.5 24V10A8.5 8.5 0 0 1 20.5 10V24" /></IconBtn>
            <IconBtn on><Cap d="M3.5 24V1.5H20.5V24" /></IconBtn>
          </Row>
          <Row label="Order:">
            <IconBtn on><Order layers="fsm" /></IconBtn>
            <IconBtn><Order layers="sfm" /></IconBtn>
            <IconBtn><Order layers="mfs" /></IconBtn>
          </Row>
          <Row label="">
            <IconBtn><Order layers="fms" /></IconBtn>
            <IconBtn><Order layers="smf" /></IconBtn>
            <IconBtn><Order layers="msf" /></IconBtn>
          </Row>
        </div>
      </div>
      <div className="flex h-[50px] shrink-0 items-center justify-end border-b border-[#e4e2e0] pr-[11px]">
        <span className="mr-[10px]">Blend mode:</span>
        <Dropdown width="w-[120px] pl-[12px] pr-[13px] justify-between">
          <span>Normal</span>
        </Dropdown>
      </div>
      <div className="flex flex-col pt-[7px] pl-px">
        <div className="flex h-[32px] items-stretch">
          <div className="flex w-[301px] items-center rounded-tr-[3px] border border-l-2 border-[#cdc7c2] border-l-[#1b6acb] bg-[#e1dedb] pt-[2px] pl-[2px]">Blur (%)</div>
          <span className="flex w-[43px] items-center pt-[2px] pl-[2px] text-[15px] tracking-normal">0.0</span>
          <PlusMinus sign="-" color="#d9d9d8" />
          <PlusMinus sign="+" color={ink} />
        </div>
        <div className="flex h-[33px] items-stretch">
          <div className="flex w-[301px] items-center border border-[#1b6acb] bg-[#3584e4] pt-[2px] pl-[3px] text-white">Opacity (%)</div>
          <span className="flex w-[43px] items-center pt-[2px] pl-[2px] text-[15px] tracking-normal">100.0</span>
          <PlusMinus sign="-" color={ink} />
          <PlusMinus sign="+" color="#d9d9d8" />
        </div>
      </div>
    </div>
  );
}

function MiniLock({ gold = true }: { gold?: boolean }) {
  return (
    <Ico size={20}>
      <defs>
        <linearGradient id="lk" x1="0" y1="0" x2="0" y2="1">
          <stop offset="0" stopColor="#fde27a" />
          <stop offset="1" stopColor="#d88a10" />
        </linearGradient>
      </defs>
      <path d="M7 11V7a5 5 0 0 1 10 0v4" stroke="#222" strokeWidth="2" />
      <rect x="4" y="11" width="16" height="11" rx="1" fill={gold ? "url(#lk)" : "#fff"} stroke="#222" strokeWidth="1.4" />
      <circle cx="12" cy="16" r="1.6" fill="#222" />
    </Ico>
  );
}

function StatusBar() {
  return (
    <div className="flex h-[39px] shrink-0 items-center text-[#3d4548]">
      <div className="flex w-[47px] flex-col items-end leading-[20px]">
        <span>Fill:</span>
        <span>Stroke:</span>
      </div>
      <div className="ml-[16px] flex w-[50px] flex-col">
        <div className="h-[19px] rounded-t-[3px] bg-[#ffff00]" />
        <div className="h-[19px] rounded-[3px] bg-black" />
      </div>
      <span className="mt-[18px] ml-[8px] w-[36px] text-[15px] tracking-normal">3.53</span>
      <span className="w-[17px]">O:</span>
      <Spin value="100" width="w-[67px]" box="h-[36px]" plusOff />
      <div className="ml-[7px] h-[38px] w-px bg-[#dedcda]" />
      <div className="flex w-[40px] justify-center">
        <Ico size={20}>
          <path d="M2 13q10-10 20 0-10 8-20 0z" fill="#fff" stroke="#111" strokeWidth="1.6" />
          <circle cx="12" cy="12" r="3.6" fill="#111" />
          <path d="M5 7L3 4M9 5L8 2M15 5l1-3M19 7l2-3" stroke="#111" strokeWidth="1.5" />
        </Ico>
      </div>
      <div className="flex w-[33px] justify-center">
        <svg width="14" height="16" viewBox="0 0 14 16"><path d="M4 7V4a3 3 0 0 1 6 0" stroke="#222" strokeWidth="1.3" fill="none" /><rect x="1" y="7" width="11" height="8" fill="#f4d878" stroke="#222" /><circle cx="6.5" cy="11" r="1" fill="#222" /></svg>
      </div>
      <div className={`ml-[1px] flex h-[38px] w-[87px] items-center justify-center gap-[6px] text-[12.5px] font-semibold ${btn}`}>
        <span>•Layer 1</span>
        <Caret w={11} />
      </div>
      <span className="ml-[1px] w-[412px] whitespace-nowrap">Drag to select nodes, click to edit only this object</span>
      <div className="h-[38px] w-px bg-[#dedcda]" />
      <div className="ml-[9px] flex w-[68px] flex-col text-[15px] leading-[20px] tracking-normal">
        <div className="flex justify-between"><span>X:</span><span>74.24</span></div>
        <div className="flex justify-between"><span>Y:</span><span>57.87</span></div>
      </div>
      <span className="ml-[11px] w-[24px]">Z:</span>
      <div className="flex h-[36px] w-[106px] rounded-[5px] border border-[#cdc7c2] bg-white">
        <span className="flex flex-1 items-center justify-center text-[15px] tracking-normal">499%</span>
        <div className="flex w-[21px] items-center justify-center border-l border-[#e8e6e4]"><svg width="10" height="10"><path d="M0 5h10" stroke={ink} strokeWidth="1.6" /></svg></div>
        <div className="flex w-[21px] items-center justify-center border-l border-[#e8e6e4]"><svg width="10" height="10"><path d="M0 5h10M5 0v10" stroke={ink} strokeWidth="1.6" /></svg></div>
      </div>
      <span className="ml-[9px] w-[23px]">R:</span>
      <div className="flex h-[36px] w-[114px] rounded-[5px] border border-[#cdc7c2] bg-white">
        <span className="flex flex-1 items-center justify-center text-[15px] tracking-normal">0.00°</span>
        <div className="flex w-[21px] items-center justify-center border-l border-[#e8e6e4]"><svg width="10" height="10"><path d="M0 5h10" stroke={ink} strokeWidth="1.6" /></svg></div>
        <div className="flex w-[21px] items-center justify-center border-l border-[#e8e6e4]"><svg width="10" height="10"><path d="M0 5h10M5 0v10" stroke={ink} strokeWidth="1.6" /></svg></div>
      </div>
    </div>
  );
}

const menus: [string, string, string][] = [
  ["", "F", "ile"], ["", "E", "dit"], ["", "V", "iew"], ["", "L", "ayer"], ["", "O", "bject"], ["", "P", "ath"], ["", "T", "ext"],
  ["Filter", "s", ""], ["Exte", "n", "sions"], ["", "H", "elp"],
];

export default function App() {
  return (
    <div className="h-[860px] w-[1220px] overflow-hidden bg-white pt-[8px] pl-[10px] [font-family:'Noto_Sans',sans-serif] text-[14px] tracking-[-0.15px] text-[#2e3436]">
      <div className="flex h-[843px] w-[1201px] flex-col overflow-hidden rounded-t-[8px] border border-[#bdb9b4] bg-[#f6f5f4]">
        <div className="relative flex h-[36px] shrink-0 items-center justify-center border-b border-[#bfb8b1] bg-gradient-to-b from-[#e3e0dd] to-[#dad6d2] font-bold tracking-[-0.25px]">
          *New document 1 - Inkscape
          <svg width="10" height="10" viewBox="0 0 10 10" className="absolute top-[13px] right-[13px]">
            <path d="M1 1l8 8M9 1L1 9" stroke={ink} strokeWidth="2" />
          </svg>
        </div>
        <div className="flex h-[27px] shrink-0 items-center gap-[16.4px] border-b border-[#dedcda] pl-[7px] text-[14.5px] text-[#3d4548]">
          {menus.map(([a, u, b]) => (
            <span key={u + b}>
              {a}
              <u className="underline-offset-2">{u}</u>
              {b}
            </span>
          ))}
        </div>
        <ToolRow1 />
        <ToolRow2 />
        <div className="flex h-[621px] shrink-0">
          <LeftTools />
          <div className="flex w-[692px] shrink-0 flex-col">
            <div className="flex h-[26px] shrink-0">
              <div className="flex h-[25px] w-[18px] items-center justify-center self-end rounded-[4px] border border-[#d8d5d2] bg-[#f2f1ef]">
                <MiniLock />
              </div>
              <TopRuler />
              <div className="flex h-[25px] w-[17px] items-center justify-center self-end rounded-[4px] border border-[#d8d5d2] bg-[#f2f1ef]">
                <div className="flex h-[11px] w-[9px] items-center justify-center border border-[#777] bg-white text-[9px] leading-none text-[#555]">1</div>
              </div>
            </div>
            <div className="flex h-[569px] shrink-0">
              <LeftRuler />
              <Canvas />
              <div className="flex w-[17px] justify-center bg-[#cdcdcd] pt-[266px]">
                <div className="h-[52px] w-[8px] rounded-full bg-[#7e8180]" />
              </div>
            </div>
            <div className="flex h-[26px] shrink-0">
              <div className="w-[18px]" />
              <div className="flex w-[657px] items-center bg-[#cdcdcd] pl-[291px]">
                <div className="mt-[-1px] h-[7px] w-[40px] rounded-full bg-[#7e8180]" />
              </div>
              <div className="flex w-[17px] items-center justify-center rounded-b-[4px] border border-[#d8d5d2] bg-[#f2f1ef]">
                <svg width="15" height="18" viewBox="0 0 15 18">
                  <defs>
                    <linearGradient id="wh" x1="0" y1="0" x2="1" y2="1">
                      <stop offset="0" stopColor="#30c030" />
                      <stop offset="0.4" stopColor="#f0e020" />
                      <stop offset="0.7" stopColor="#e02020" />
                      <stop offset="1" stopColor="#d020c0" />
                    </linearGradient>
                  </defs>
                  <path d="M1 1l13 7-9 9z" fill="url(#wh)" />
                  <path d="M5 17L1 1l6 9z" fill="#203090" />
                </svg>
              </div>
            </div>
          </div>
          <div className="flex w-[14px] shrink-0 flex-col items-center gap-[2px] pt-[305px]">
            <div className="h-[3px] w-[3px] rounded-full bg-[#2e3436]" />
            <div className="h-[3px] w-[3px] rounded-full bg-[#2e3436]" />
            <div className="h-[3px] w-[3px] rounded-full bg-[#2e3436]" />
          </div>
          <Dock />
          <RightTools />
        </div>
        <div className="flex h-[35px] shrink-0 border-t border-white">
          <div className="flex w-[1162px] shrink-0 flex-col">
            <div className="flex h-[19px] shrink-0 overflow-hidden">
              <svg width="12" height="19" viewBox="0 0 12 19" className="shrink-0 bg-white">
                <path d="M0 1l12 17M0 18L12 1" stroke="#800000" strokeWidth="1.6" />
              </svg>
              {swatches.map((c, i) => (
                <div key={i} className="h-full w-[19px] shrink-0" style={{ backgroundColor: c }} />
              ))}
            </div>
            <div className="flex h-[15px] items-center bg-[#cdcdcd] pl-[3px]">
              <div className="h-[8px] w-[158px] rounded-full bg-[#7e8180]" />
            </div>
          </div>
          <div className="flex flex-1 items-start justify-center pt-[11px] pl-[1px]">
            <svg width="8" height="12" viewBox="0 0 8 12">
              <path d="M7 0L1 6l6 6z" fill={ink} />
            </svg>
          </div>
        </div>
        <StatusBar />
      </div>
    </div>
  );
}
